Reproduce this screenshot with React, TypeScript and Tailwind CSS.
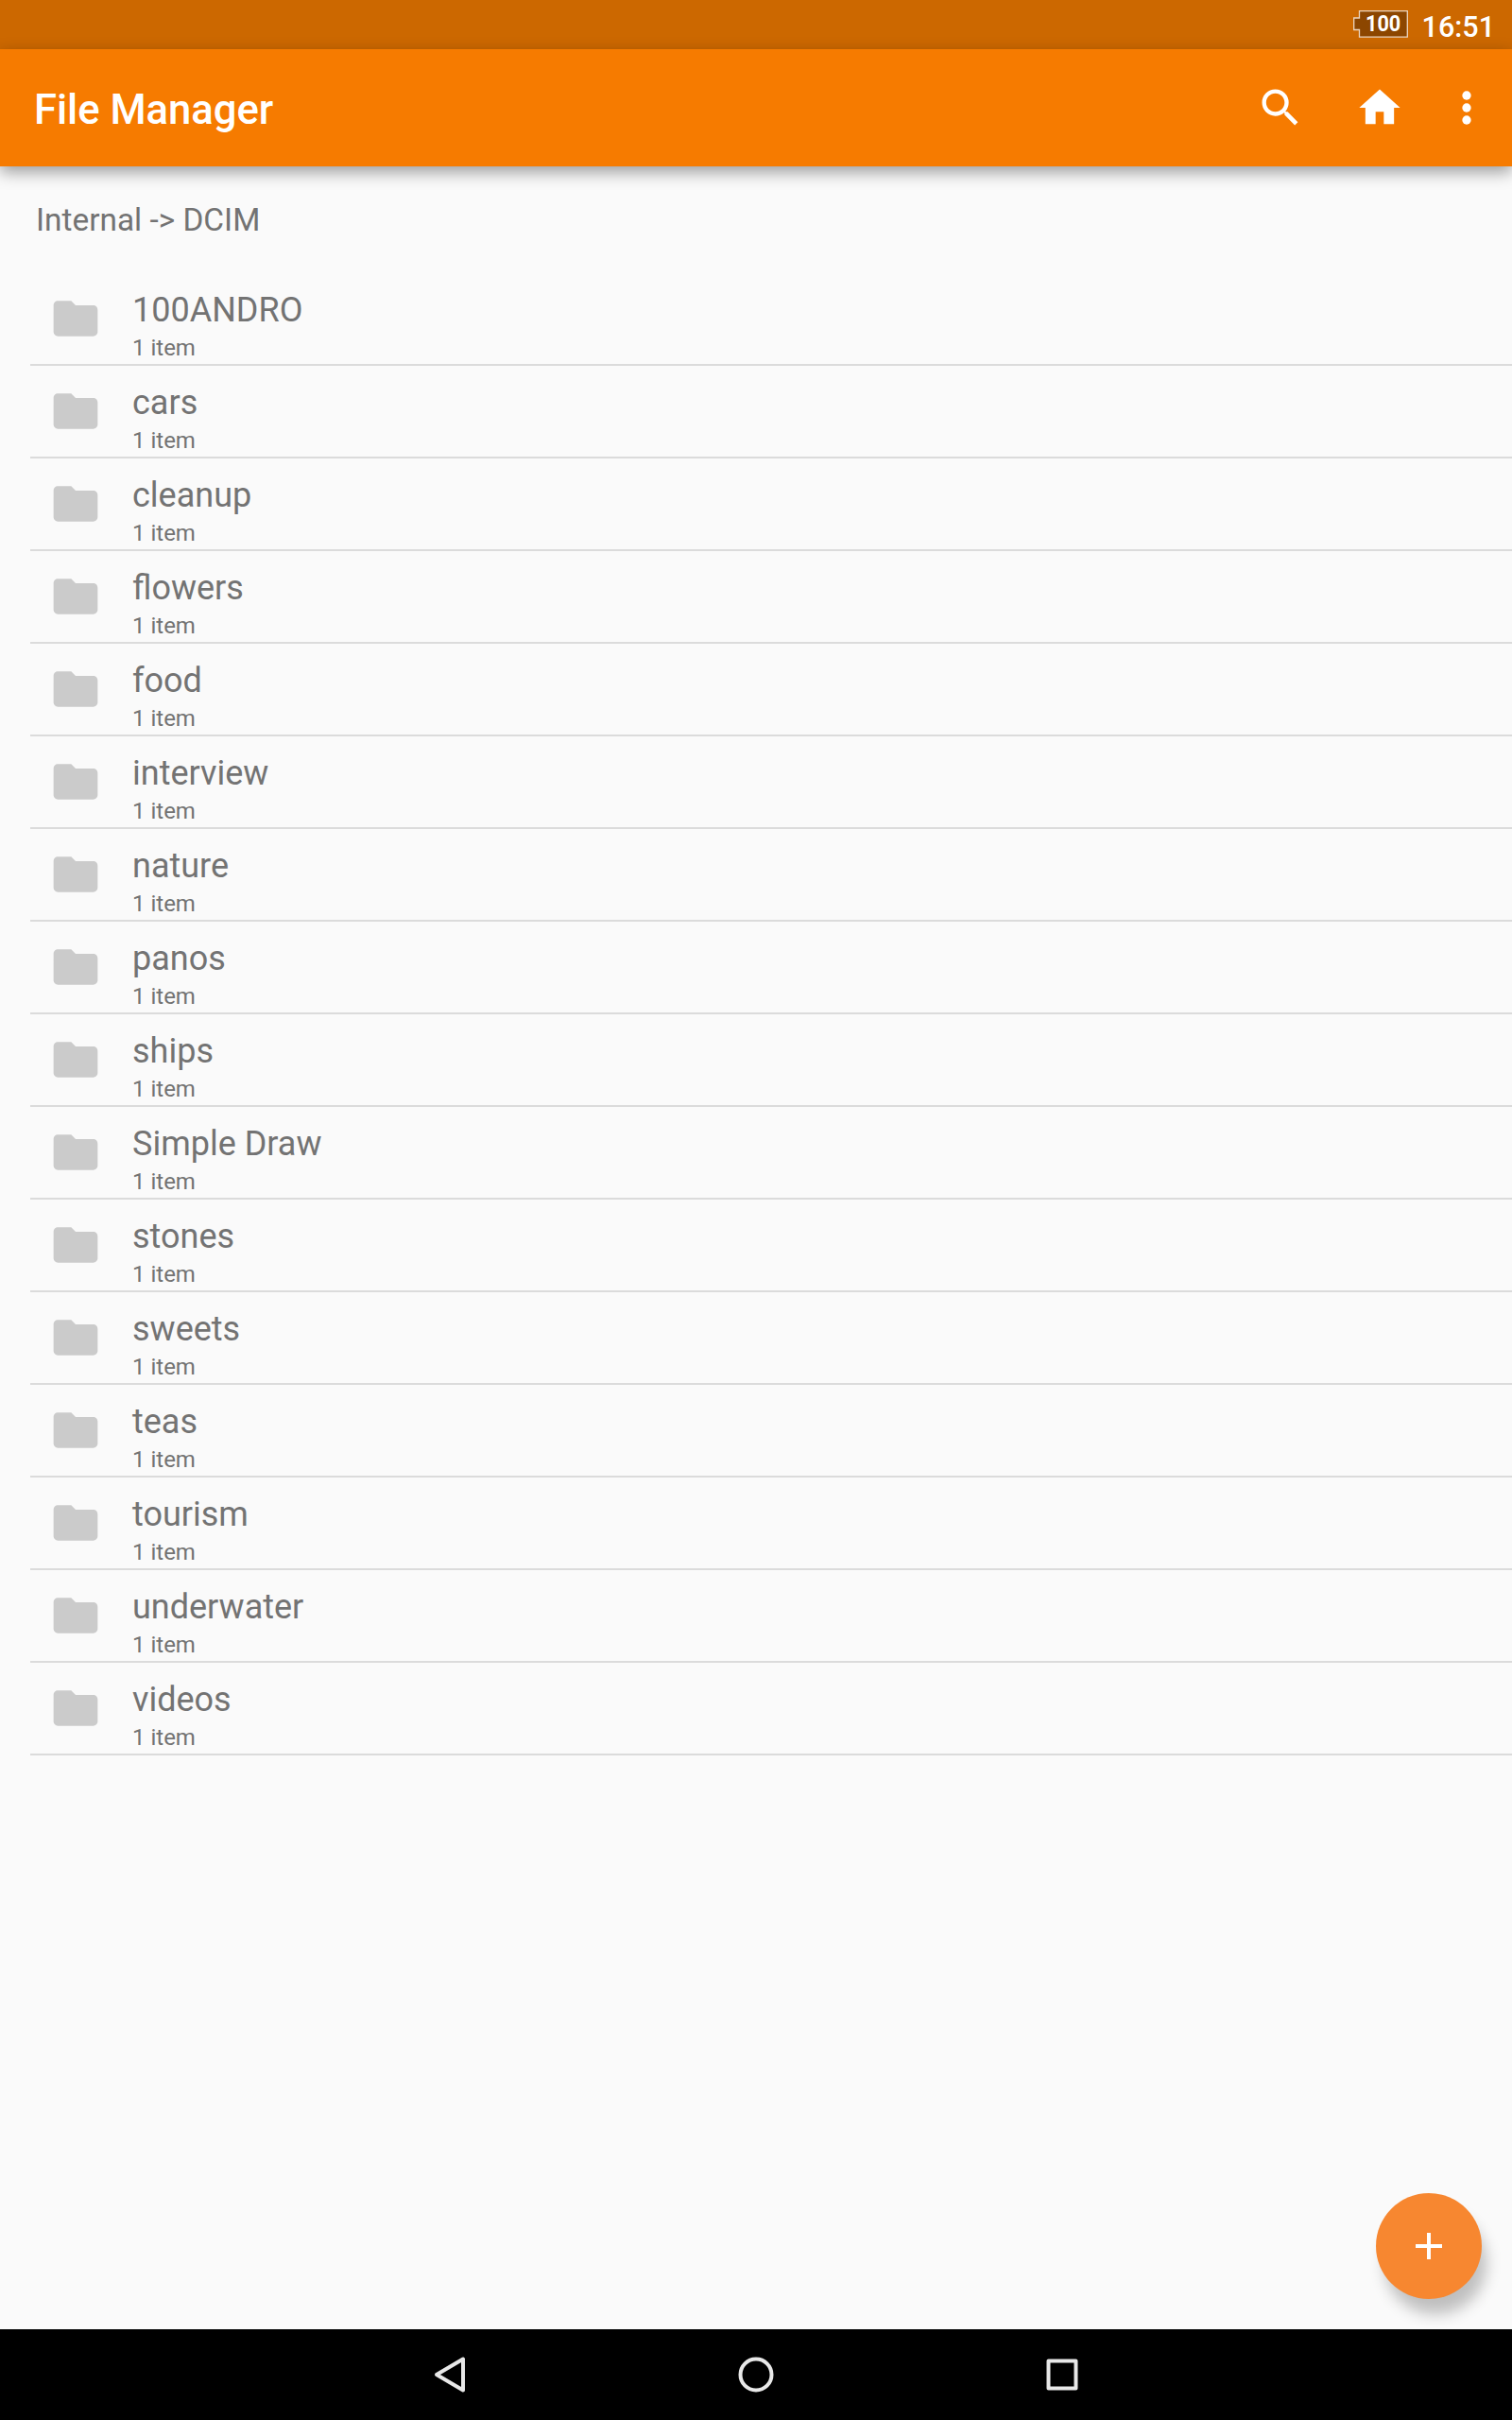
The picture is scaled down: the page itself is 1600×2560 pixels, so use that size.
const folders = [
  '100ANDRO', 'cars', 'cleanup', 'flowers', 'food', 'interview', 'nature', 'panos',
  'ships', 'Simple Draw', 'stones', 'sweets', 'teas', 'tourism', 'underwater', 'videos',
];

function StatusBar() {
  return (
    <div className="flex h-[52px] items-start justify-end bg-[#cc6800] pr-[18px] text-white">
      <div className="relative mt-[11px] h-[29px] w-[58px]">
        <svg className="absolute inset-0" width="58" height="29" viewBox="0 0 58 29">
          <path d="M6.5 .7H57.3V28.2H6.5V20.5H.7V8H6.5Z" fill="#8c4600" stroke="#ecd5bf" strokeWidth="1.3" />
        </svg>
        <span className="absolute top-0 left-[13px] origin-left scale-x-[0.9] text-[24px] leading-[29px] font-bold">100</span>
      </div>
      <span className="ml-[15px] text-[30.5px] leading-[57px] font-medium">16:51</span>
    </div>
  );
}

function AppBar() {
  return (
    <header className="relative z-10 flex h-[123.5px] items-start bg-[#f67b00] pl-[36px] text-white shadow-[0_6px_16px_rgba(0,0,0,0.38)]">
      <h1 className="mt-[40px] flex-1 text-[43.6px] leading-[50px] font-medium">File Manager</h1>
      <div className="mt-[36px] flex pr-[22px]">
        <svg className="mr-[53px] size-[52px]" viewBox="0 0 24 24" fill="currentColor">
          <path d="M15.5 14h-.79l-.28-.27A6.471 6.471 0 0 0 16 9.5 6.5 6.5 0 1 0 9.5 16c1.61 0 3.09-.59 4.23-1.57l.27.28v.79l5 4.99L20.49 19l-4.99-5zm-6 0C7.01 14 5 11.99 5 9.5S7.01 5 9.5 5 14 7.01 14 9.5 11.99 14 9.5 14z" />
        </svg>
        <svg className="mr-[40px] size-[52px]" viewBox="0 0 24 24" fill="currentColor">
          <path d="M10 20v-6h4v6h5v-8h3L12 3 2 12h3v8z" />
        </svg>
        <svg className="size-[52px]" viewBox="0 0 24 24" fill="currentColor">
          <circle cx="12" cy="6" r="2.15" />
          <circle cx="12" cy="12" r="2.15" />
          <circle cx="12" cy="18" r="2.15" />
        </svg>
      </div>
    </header>
  );
}

function FolderRow({ name }: { name: string }) {
  return (
    <li className="ml-[32px] flex h-[98px] border-b-2 border-[#dbdbdb] pl-[20px]">
      <svg className="mt-[20px] size-[56px]" viewBox="0 0 24 24" fill="#cbcbcb">
        <path d="M10 4H4c-1.1 0-1.99.9-1.99 2L2 18c0 1.1.9 2 2 2h16c1.1 0 2-.9 2-2V8c0-1.1-.9-2-2-2h-8l-2-2z" />
      </svg>
      <div className="ml-[32px] flex flex-col">
        <span className="mt-[18px] text-[36px] leading-[42px]">{name}</span>
        <span className="mt-[5px] text-[24px] leading-[28px]">1 item</span>
      </div>
    </li>
  );
}

function NavBar() {
  return (
    <nav className="flex h-[96px] items-center justify-center gap-[276px] bg-black">
      <svg width="48" height="48" viewBox="0 0 48 48" fill="none" stroke="#e8e8e8" strokeWidth="4" strokeLinejoin="round">
        <path d="M10 24 38 7.5V40.5Z" />
      </svg>
      <svg width="48" height="48" viewBox="0 0 48 48" fill="none" stroke="#e8e8e8" strokeWidth="4">
        <circle cx="24" cy="24" r="16.5" />
      </svg>
      <svg width="48" height="48" viewBox="0 0 48 48" fill="none" stroke="#e8e8e8" strokeWidth="4" strokeLinejoin="round">
        <rect x="9.5" y="9.5" width="29" height="29" />
      </svg>
    </nav>
  );
}

export default function App() {
  return (
    <div className="relative flex h-[2560px] w-[1600px] flex-col bg-[#fafafa] font-[Roboto,sans-serif] text-[#737373]">
      <StatusBar />
      <AppBar />
      <main className="flex-1">
        <p className="mt-[37.5px] mb-[36px] ml-[38px] text-[33.4px] leading-[40px]">Internal -&gt; DCIM</p>
        <ul>
          {folders.map((name) => (
            <FolderRow key={name} name={name} />
          ))}
        </ul>
      </main>
      <button className="absolute right-[32px] bottom-[128px] flex size-[112px] items-center justify-center rounded-full bg-[#f78730] shadow-[7px_18px_16px_-2px_rgba(0,0,0,0.24)]">
        <svg width="28" height="28" viewBox="0 0 28 28" stroke="#fff" strokeWidth="4">
          <path d="M14 0V28M0 14H28" />
        </svg>
      </button>
      <NavBar />
    </div>
  );
}
